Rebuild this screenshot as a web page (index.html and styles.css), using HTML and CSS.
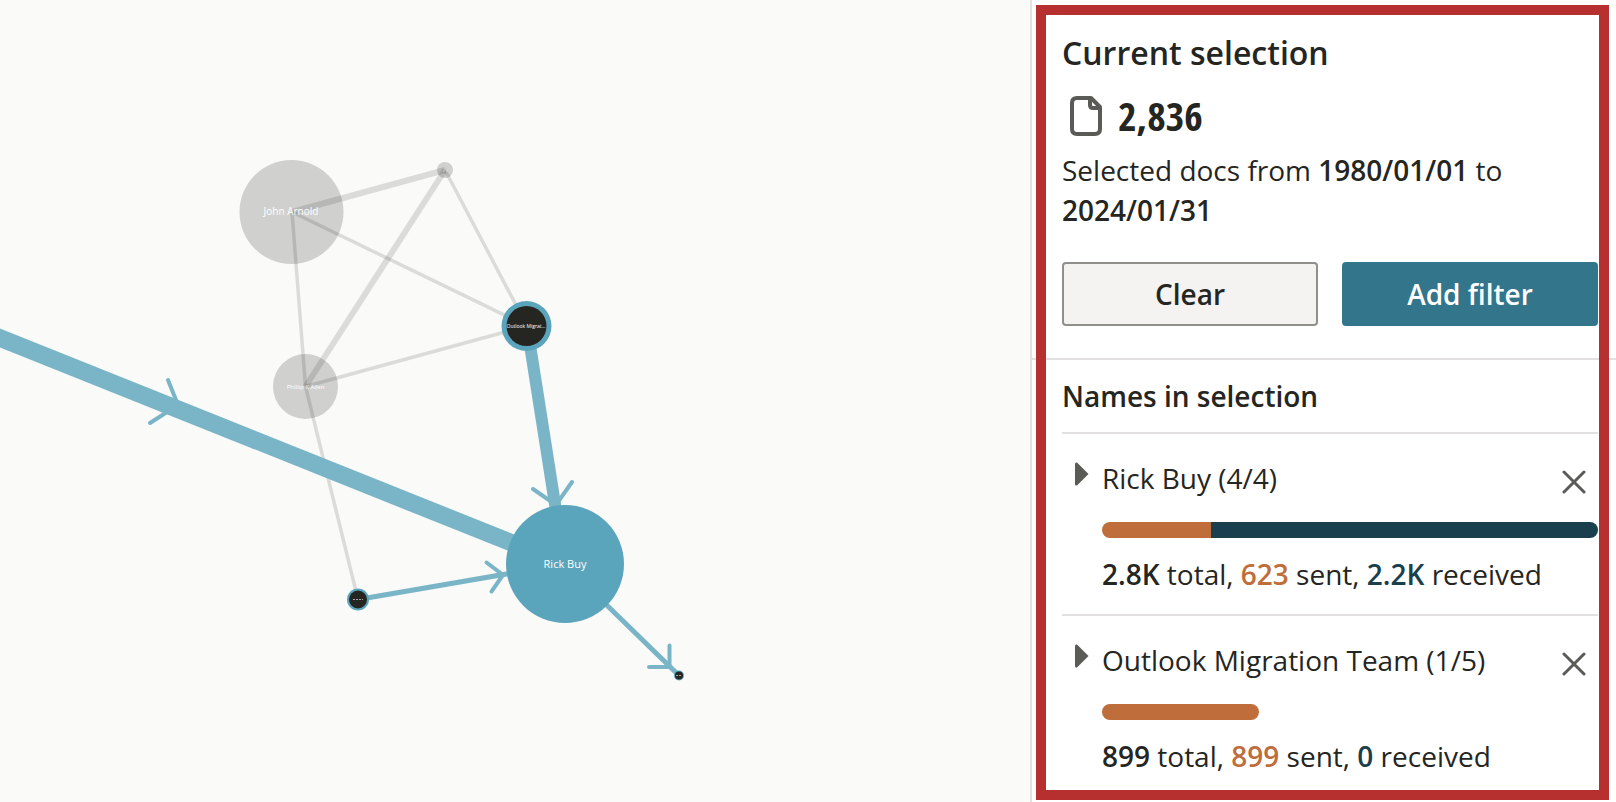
FILE: index.html
```html
<!DOCTYPE html>
<html lang="en">
<head>
<meta charset="utf-8">
<title>Communication network</title>
<link rel="stylesheet" href="styles.css">
</head>
<body>
<div class="app">
  <main class="canvas">
    <svg class="graph" width="1030" height="802" viewBox="0 0 1030 802" role="img" aria-label="Communication network graph">
      <g class="node-muted">
        <circle cx="291.500" cy="212" r="52"/>
        <circle cx="445" cy="170" r="8"/>
        <circle cx="305.500" cy="386.500" r="32.500"/>
      </g>
      <g class="edge-muted">
        <path class="thick" d="M292 212L445 170"/>
        <path class="thick" d="M445 170L305.500 386.500"/>
        <path d="M292 212L305.500 386.500"/>
        <path d="M292 212L527 326"/>
        <path d="M445 170L527 326"/>
        <path d="M305.500 386.500L527 326"/>
        <path d="M305.500 386.500L358 599.500"/>
      </g>
      <g class="edge">
        <path class="wide" d="M-20 330L564.500 564"/>
        <path class="medium" d="M527 326L560 536"/>
        <path class="narrow" d="M358 599.500L564.500 564"/>
        <path class="narrow" d="M564.500 564L679 675.500"/>
        <path class="head" d="M168 380L178 405L150 423"/>
        <path class="head" d="M533 489L556 505L572 482"/>
        <path class="head" d="M486.500 562.500L503 575L491.500 591.500"/>
        <path class="head" d="M669.500 645.500V667H649"/>
      </g>
      <circle class="node-accent" cx="565" cy="564" r="59"/>
      <circle class="node-accent" cx="526.500" cy="326" r="25"/>
      <circle class="node-dark" cx="526.500" cy="326" r="20"/>
      <circle class="node-accent" cx="358" cy="599.500" r="11"/>
      <circle class="node-dark" cx="358" cy="599.500" r="9"/>
      <circle class="node-accent" cx="679" cy="675.500" r="5"/>
      <circle class="node-dark" cx="679" cy="675.500" r="4"/>
      <path class="tick" d="M353 599.500H363M676 675.500H682M443 171H448"/>
      <g class="label">
        <text class="s10" x="291" y="215">John Arnold</text>
        <text class="s6" x="305.500" y="389">Phillip K Allen</text>
        <text class="s5" x="526" y="328">Outlook Migrat…</text>
        <text class="s11" x="565" y="568">Rick Buy</text>
      </g>
    </svg>
  </main>
  <aside class="panel">
    <div class="frame">
      <section class="summary">
        <h1 class="title">Current selection</h1>
        <div class="count">
          <svg class="icon-doc" width="32" height="40" viewBox="0 0 32 40" aria-hidden="true">
            <path d="M7 2H21L30 11V33Q30 38 25 38H7Q2 38 2 33V7Q2 2 7 2Z"/>
            <path d="M20 3V9Q20 12 23 12H29"/>
          </svg>
          <strong class="count-value">2,836</strong>
        </div>
        <p class="range">Selected docs from <b>1980/01/01</b> to <b>2024/01/31</b></p>
        <div class="actions">
          <button class="btn" type="button">Clear</button>
          <button class="btn btn-primary" type="button">Add filter</button>
        </div>
      </section>
      <section class="names">
        <h2 class="subtitle">Names in selection</h2>
        <ul class="list">
          <li class="item">
            <div class="item-head">
              <button class="toggle" type="button" aria-label="Expand Rick Buy"><svg width="15" height="24" viewBox="0 0 15 24" aria-hidden="true"><path d="M1 2V22Q1 24 3 23.500L14.500 12L3 0.500Q1 0 1 2Z"/></svg></button>
              <span class="name">Rick Buy (4/4)</span>
              <button class="remove" type="button" aria-label="Remove Rick Buy"><svg width="24" height="24" viewBox="0 0 24 24" aria-hidden="true"><path d="M2 2L22 22M22 2L2 22"/></svg></button>
            </div>
            <div class="bar" style="width:100%"><span class="sent" style="flex-grow:22"></span><span class="received" style="flex-grow:78"></span></div>
            <p class="stats"><b>2.8K</b> total, <b class="c-sent">623</b> sent, <b class="c-received">2.2K</b> received</p>
          </li>
          <li class="item">
            <div class="item-head">
              <button class="toggle" type="button" aria-label="Expand Outlook Migration Team"><svg width="15" height="24" viewBox="0 0 15 24" aria-hidden="true"><path d="M1 2V22Q1 24 3 23.500L14.500 12L3 0.500Q1 0 1 2Z"/></svg></button>
              <span class="name">Outlook Migration Team (1/5)</span>
              <button class="remove" type="button" aria-label="Remove Outlook Migration Team"><svg width="24" height="24" viewBox="0 0 24 24" aria-hidden="true"><path d="M2 2L22 22M22 2L2 22"/></svg></button>
            </div>
            <div class="bar" style="width:31.7%"><span class="sent" style="flex-grow:1"></span></div>
            <p class="stats"><b>899</b> total, <b class="c-sent">899</b> sent, <b class="c-received">0</b> received</p>
          </li>
        </ul>
      </section>
    </div>
  </aside>
</div>
</body>
</html>
```
FILE: styles.css
```css
* { box-sizing: border-box; }
body {
  margin: 0;
  background: #fafaf9;
  color: #252522;
  font: 28px/40px "Open Sans", "Noto Sans", sans-serif;
}
h1, h2, p, ul { margin: 0; padding: 0; }
b { font-weight: 600; }

.app { display: flex; min-height: 100vh; }
.canvas { flex: 1; min-width: 0; overflow: hidden; }
.graph { display: block; }

.node-muted { fill: #d0d0ce; }
.node-accent { fill: #5ba5bc; }
.node-dark { fill: #252522; }
.edge-muted { fill: none; stroke: #252522; stroke-opacity: 0.14; stroke-width: 3.5; }
.edge-muted .thick { stroke-width: 6; }
.edge { fill: none; stroke: #7ab5c7; }
.wide { stroke-width: 17.5; }
.medium { stroke-width: 12; }
.narrow { stroke-width: 5; }
.head { stroke-width: 4; stroke-linecap: round; }
.tick { stroke: #fff; stroke-opacity: 0.6; stroke-dasharray: 2 1; }
.label { fill: #fff; text-anchor: middle; font-weight: 500; }
.s11 { font-size: 11px; }
.s10 { font-size: 10px; }
.s6 { font-size: 6px; }
.s5 { font-size: 5px; }

.panel {
  position: relative;
  display: flex;
  flex: 0 0 586px;
  border-left: 2px solid #e2e1df;
  background: #fff;
}
.frame { flex: 1; }
.panel::after {
  content: "";
  position: absolute;
  inset: 5px 7px 2px 4px;
  border: 10px solid #b73030;
  pointer-events: none;
}

.summary { padding: 32px 18px 32px 30px; border-bottom: 2px solid #e2e1e0; }
.title { font-size: 32px; line-height: 42px; font-weight: 600; }
.count {
  display: flex;
  align-items: center;
  gap: 16px;
  height: 56px;
  margin: 14px 0 6px;
  padding-left: 8px;
}
.icon-doc { fill: none; stroke: #5a5a56; stroke-width: 4; stroke-linejoin: round; }
.count-value {
  font-family: "Open Sans Condensed", "Liberation Sans Narrow", "Open Sans", sans-serif;
  font-size: 40px;
  font-weight: 700;
}
.actions { display: grid; grid-template-columns: 1fr 1fr; gap: 24px; margin-top: 32px; }
.btn {
  height: 64px;
  border: 2px solid #918f8b;
  border-radius: 4px;
  background: #f4f3f2;
  color: inherit;
  font: inherit;
  font-weight: 600;
}
.btn-primary { border-color: #33758b; background: #33758b; color: #fff; }

.names { padding: 16px 18px 0 30px; }
.subtitle { font-size: 28px; font-weight: 600; }
.list { margin-top: 16px; list-style: none; }
.item { padding: 24px 0 20px 40px; border-top: 2px solid #e2e1e0; }
.item-head { display: flex; align-items: center; }
.toggle, .remove {
  display: flex;
  padding: 0;
  border: 0;
  background: none;
}
.toggle { width: 28px; margin: 0 0 8px -28px; fill: #5a5a56; }
.name { flex: 1; }
.remove { margin: 8px 12px 0 0; }
.remove path { stroke: #5a5a56; stroke-width: 3; stroke-linecap: round; }
.bar { display: flex; height: 16px; margin: 24px 0 16px; border-radius: 8px; overflow: hidden; }
.sent { background: #bf6d3a; }
.received { background: #1a404d; }
.c-sent { color: #bf6d3a; }
.c-received { color: #1a404d; }
```
